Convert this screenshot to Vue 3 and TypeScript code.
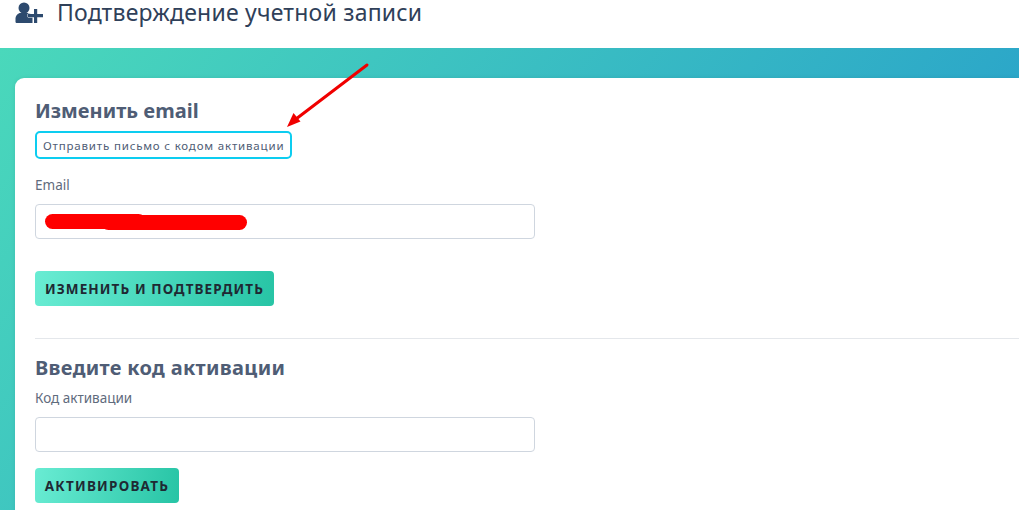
<script setup lang="ts">
const title = 'Подтверждение учетной записи'
</script>

<template>
  <div class="page">
    <header class="head">
      <svg class="ico" width="29" height="22" viewBox="0 0 29 22">
        <circle cx="9" cy="6" r="5.500" fill="#2d4a6e" />
        <path d="M.5 20v-3.500c0-3 2.500-5.500 5-5.500h6.500c2.500 0 4.500 1 5.500 2.500v7.500H2c-1 0-1.500-.5-1.500-1Z" fill="#2d4a6e" />
        <path d="M19 7h3.200v5h5.800v3.200h-5.800V21H19v-5.800h-6V12h6Z" fill="#2d4a6e" stroke="#fff" stroke-width="1" paint-order="stroke" />
      </svg>
      <h1>{{ title }}</h1>
    </header>
    <main class="band">
      <section class="card">
        <h2>Изменить email</h2>
        <button class="outline">Отправить письмо с кодом активации</button>
        <label class="lab first">Email</label>
        <div class="field">
          <span class="blot left"></span>
          <span class="blot right"></span>
        </div>
        <button class="cta one">ИЗМЕНИТЬ И ПОДТВЕРДИТЬ</button>
        <hr />
        <h2 class="second">Введите код активации</h2>
        <label class="lab two">Код активации</label>
        <div class="field gap"></div>
        <button class="cta three">АКТИВИРОВАТЬ</button>
      </section>
    </main>
    <svg class="arrow" width="100" height="80" viewBox="280 60 100 80">
      <path d="M367 65 296 119" stroke="#f00000" stroke-width="3" stroke-linecap="round" fill="none" />
      <path d="M287 127 293.500 113 300.500 121.500Z" fill="#f00000" />
    </svg>
  </div>
</template>

<style>
html, body { margin: 0; background: #fff; overflow: hidden; }
</style>

<style scoped>
.page {
  position: relative;
  width: 1019px;
  height: 510px;
  overflow: hidden;
  font-family: "Noto Sans", "Open Sans", sans-serif;
}
.head {
  height: 48px;
  display: flex;
  align-items: flex-start;
  box-sizing: border-box;
  padding-left: 15px;
}
.ico { margin-top: 2px; flex: none; }
h1 {
  margin: 0 0 0 13px;
  font-size: 23px;
  line-height: 24px;
  font-weight: 400;
  color: #2f4059;
  letter-spacing: 0.22px;
  white-space: nowrap;
}
.band {
  height: 462px;
  box-sizing: border-box;
  padding: 30px 0 0 15px;
  background: linear-gradient(128deg, #4ad8bb 0%, #2297cd 100%);
}
.card {
  background: #fff;
  border-radius: 9px 0 0 0;
  height: 440px;
  box-sizing: border-box;
  padding: 20px 0 0 20px;
  display: flex;
  flex-direction: column;
  align-items: flex-start;
  box-shadow: 0 0 4px rgba(0, 0, 0, 0.08);
}
h2 {
  margin: 0;
  font-size: 20px;
  line-height: 26px;
  font-weight: 700;
  color: #4f5d75;
}
.outline {
  margin-top: 7px;
  width: 257px;
  height: 28px;
  box-sizing: border-box;
  padding: 0 0 0 6px;
  text-align: left;
  background: #fff;
  border: 2px solid #0dcdf0;
  border-radius: 5px;
  font: 400 11.500px "Noto Sans", sans-serif;
  letter-spacing: 0.82px;
  color: #4f5d75;
  white-space: nowrap;
}
.lab {
  font-size: 13.500px;
  line-height: 18px;
  color: #5f6b7d;
}
.lab.first { margin-top: 17px; }
.lab.two { margin-top: 8px; }
.field {
  margin-top: 10px;
  width: 500px;
  height: 35px;
  box-sizing: border-box;
  border: 1px solid #cfd6df;
  border-radius: 4px;
  background: #fff;
  position: relative;
}
.blot {
  position: absolute;
  height: 15px;
  border-radius: 8px;
  background: #ff0000;
}
.blot.left { left: 9px; top: 8.500px; width: 101px; }
.blot.right { left: 65px; top: 9.500px; width: 146px; }
.cta {
  height: 35px;
  box-sizing: border-box;
  padding: 0;
  border: none;
  border-radius: 4px;
  background: linear-gradient(100deg, #69ecd3 0%, #27c4a5 100%);
  color: #1f2933;
  font: 700 13.500px "Noto Sans", sans-serif;
  letter-spacing: 1.1px;
  white-space: nowrap;
}
.one { margin-top: 32px; width: 239px; }
.three { margin-top: 16px; width: 144px; letter-spacing: 1.25px; }
hr {
  margin: 32px 0 0;
  width: 100%;
  border: none;
  border-top: 1px solid #e4e7eb;
  align-self: stretch;
}
.second { margin-top: 16px; letter-spacing: 0.33px; }
.arrow {
  position: absolute;
  left: 280px;
  top: 60px;
}
</style>
